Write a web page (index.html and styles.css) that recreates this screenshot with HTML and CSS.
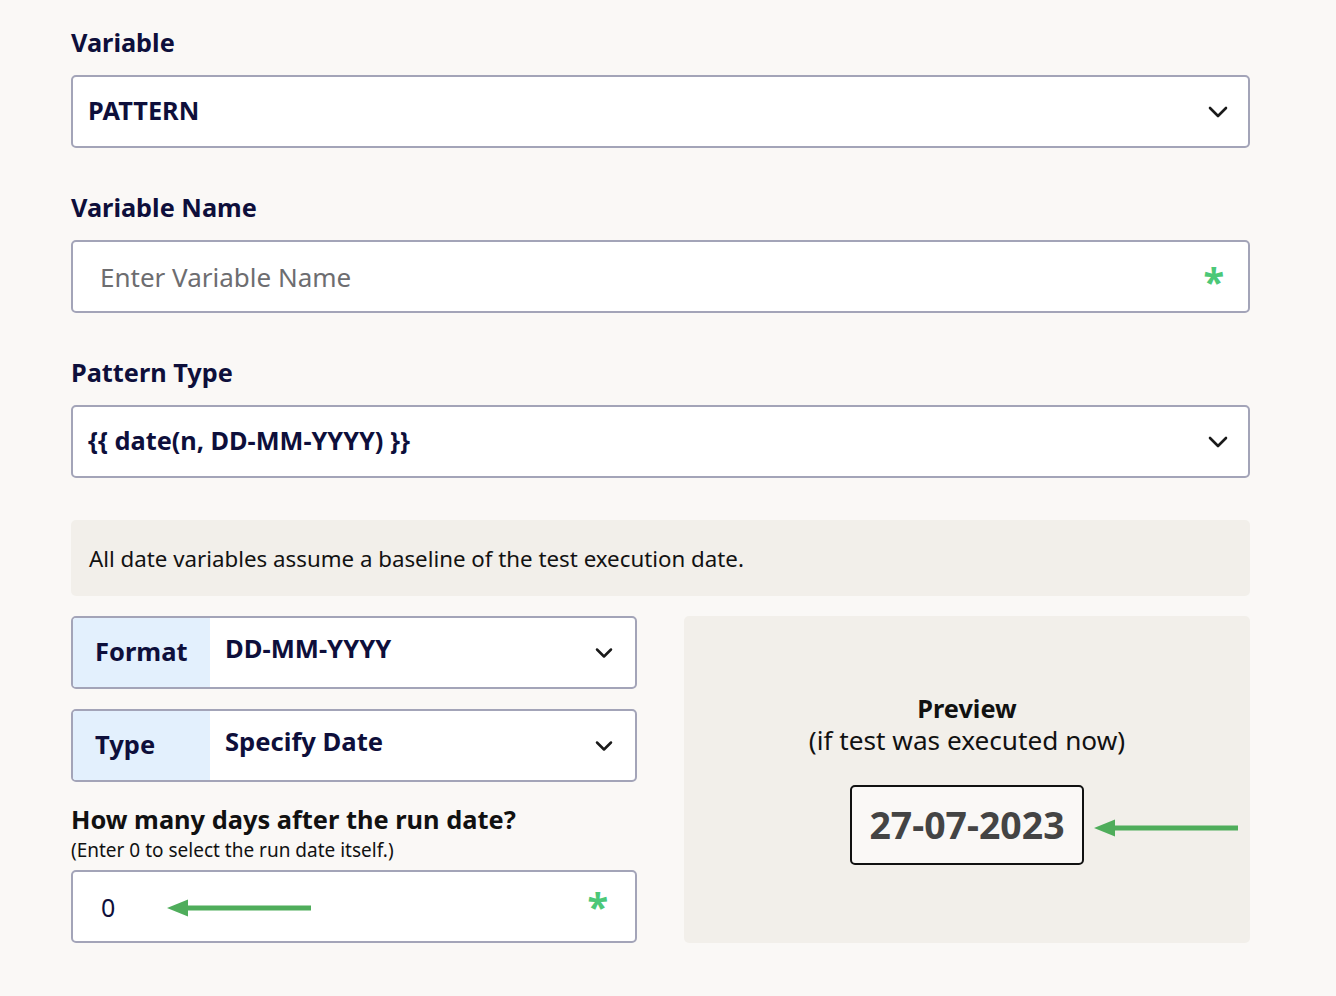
FILE: index.html
```html
<!DOCTYPE html>
<html lang="en">
<head>
<meta charset="utf-8">
<title>Pattern Variable</title>
<link rel="stylesheet" href="styles.css">
</head>
<body>
<main class="form">
  <div class="field">
    <label class="label">Variable</label>
    <div class="control select">
      <span class="value">PATTERN</span>
      <svg class="chev" width="20" height="12" viewBox="0 0 20 12"><path d="M2 2 L10 10 L18 2" fill="none" stroke="#1a1a1a" stroke-width="2.6" stroke-linecap="round" stroke-linejoin="round"/></svg>
    </div>
  </div>

  <div class="field">
    <label class="label">Variable Name</label>
    <div class="control input">
      <span class="placeholder">Enter Variable Name</span>
      <span class="req">*</span>
    </div>
  </div>

  <div class="field">
    <label class="label">Pattern Type</label>
    <div class="control select">
      <span class="value">{{ date(n, DD-MM-YYYY) }}</span>
      <svg class="chev" width="20" height="12" viewBox="0 0 20 12"><path d="M2 2 L10 10 L18 2" fill="none" stroke="#1a1a1a" stroke-width="2.6" stroke-linecap="round" stroke-linejoin="round"/></svg>
    </div>
  </div>

  <div class="info">All date variables assume a baseline of the test execution date.</div>

  <div class="split">
    <div class="left">
      <div class="group">
        <div class="addon">Format</div>
        <div class="group-select">
          <span class="gvalue">DD-MM-YYYY</span>
          <svg class="chev" width="20" height="12" viewBox="0 0 20 12"><path d="M3 2.5 L10 9.5 L17 2.5" fill="none" stroke="#1a1a1a" stroke-width="2.5" stroke-linecap="round" stroke-linejoin="round"/></svg>
        </div>
      </div>
      <div class="group">
        <div class="addon">Type</div>
        <div class="group-select">
          <span class="gvalue">Specify Date</span>
          <svg class="chev" width="20" height="12" viewBox="0 0 20 12"><path d="M3 2.5 L10 9.5 L17 2.5" fill="none" stroke="#1a1a1a" stroke-width="2.5" stroke-linecap="round" stroke-linejoin="round"/></svg>
        </div>
      </div>
      <div class="days">
        <div class="days-title">How many days after the run date?</div>
        <div class="days-hint">(Enter 0 to select the run date itself.)</div>
        <div class="control input small">
          <span class="num">0</span>
          <span class="req">*</span>
          <svg class="arrow arrow-input" width="146" height="20" viewBox="0 0 146 20"><path d="M20 10 H144" stroke="#4fad5b" stroke-width="5"/><path d="M0 10 L21 1.5 L21 18.5 Z" fill="#4fad5b"/></svg>
        </div>
      </div>
    </div>
    <div class="preview">
      <div class="preview-title">Preview</div>
      <div class="preview-sub">(if test was executed now)</div>
      <div class="preview-date">27-07-2023</div>
      <svg class="arrow arrow-preview" width="146" height="20" viewBox="0 0 146 20"><path d="M20 10 H144" stroke="#4fad5b" stroke-width="5"/><path d="M0 10 L21 1.5 L21 18.5 Z" fill="#4fad5b"/></svg>
    </div>
  </div>
</main>
</body>
</html>
```
FILE: styles.css
```css
html, body {
  margin: 0;
  padding: 0;
  background: #faf8f6;
}
body {
  font-family: "Noto Sans", "Open Sans", "Liberation Sans", sans-serif;
  color: #0e0f3b;
}
.form {
  width: 1179px;
  margin-left: 71px;
  padding-top: 25px;
  display: flex;
  flex-direction: column;
}
.field {
  display: flex;
  flex-direction: column;
  margin-bottom: 42px;
}
.label {
  font-size: 25.3px;
  font-weight: 700;
  line-height: 34px;
  margin-bottom: 16px;
  color: #0e0f3b;
}
.control {
  box-sizing: border-box;
  height: 73px;
  border: 2px solid #a3a4b8;
  border-radius: 5px;
  background: #ffffff;
  display: flex;
  align-items: center;
  position: relative;
}
.select {
  padding: 0 20px 0 15px;
  justify-content: space-between;
}
.select .value {
  font-size: 25.3px;
  font-weight: 700;
  color: #0e0f3b;
  margin-top: -3px;
}
.chev {
  flex: none;
}
.input {
  padding: 0 24px 0 27px;
  justify-content: space-between;
}
.placeholder {
  font-size: 26px;
  color: #6d6d70;
}
.req {
  font-size: 38px;
  font-weight: 700;
  color: #4cc878;
  line-height: 1;
  margin-top: 8px;
}
.info {
  box-sizing: border-box;
  height: 76px;
  background: #f2efea;
  border-radius: 5px;
  padding: 0 18px;
  display: flex;
  align-items: center;
  font-size: 22.3px;
  color: #121212;
  margin-bottom: 20px;
}
.split {
  display: grid;
  grid-template-columns: 566px 566px;
  column-gap: 47px;
}
.left {
  display: flex;
  flex-direction: column;
}
.group {
  box-sizing: border-box;
  height: 73px;
  border: 2px solid #a3a4b8;
  border-radius: 5px;
  background: #ffffff;
  display: flex;
  overflow: hidden;
  margin-bottom: 20px;
}
.addon {
  width: 137px;
  flex: none;
  background: #e3f0fd;
  display: flex;
  align-items: center;
  padding-left: 22px;
  box-sizing: border-box;
  font-size: 25.5px;
  font-weight: 700;
  color: #0e0f3b;
  padding-bottom: 4px;
}
.group-select {
  flex: 1;
  display: flex;
  align-items: center;
  justify-content: space-between;
  padding: 0 21px 0 15px;
}
.gvalue {
  font-size: 25.6px;
  font-weight: 700;
  color: #0e0f3b;
  margin-top: -8px;
}
.days-title {
  font-size: 25.4px;
  font-weight: 700;
  color: #111111;
  line-height: 32px;
  margin-top: 1px;
}
.days-hint {
  font-size: 19px;
  color: #111111;
  line-height: 24px;
  margin-top: 3px;
  margin-bottom: 8px;
}
.small {
  padding: 0 27px 0 28px;
}
.small .req {
  margin-top: -2px;
}
.num {
  font-size: 25px;
  color: #0e0f3b;
}
.arrow {
  position: absolute;
}
.arrow-input {
  left: 94px;
  top: 26px;
}
.preview {
  background: #f2efea;
  border-radius: 5px;
  display: flex;
  flex-direction: column;
  align-items: center;
  justify-content: center;
  position: relative;
  padding-bottom: 1px;
}
.preview-title {
  font-size: 25.3px;
  font-weight: 700;
  color: #111111;
  line-height: 31px;
}
.preview-sub {
  font-size: 26.2px;
  color: #111111;
  line-height: 32px;
  margin-bottom: 29px;
}
.preview-date {
  box-sizing: border-box;
  width: 234px;
  height: 80px;
  border: 2px solid #111111;
  border-radius: 5px;
  background: #faf8f6;
  display: flex;
  align-items: center;
  justify-content: center;
  font-size: 37.4px;
  font-weight: 700;
  color: #444444;
  padding-bottom: 2px;
}
.arrow-preview {
  left: 410px;
  top: 202px;
}
```
